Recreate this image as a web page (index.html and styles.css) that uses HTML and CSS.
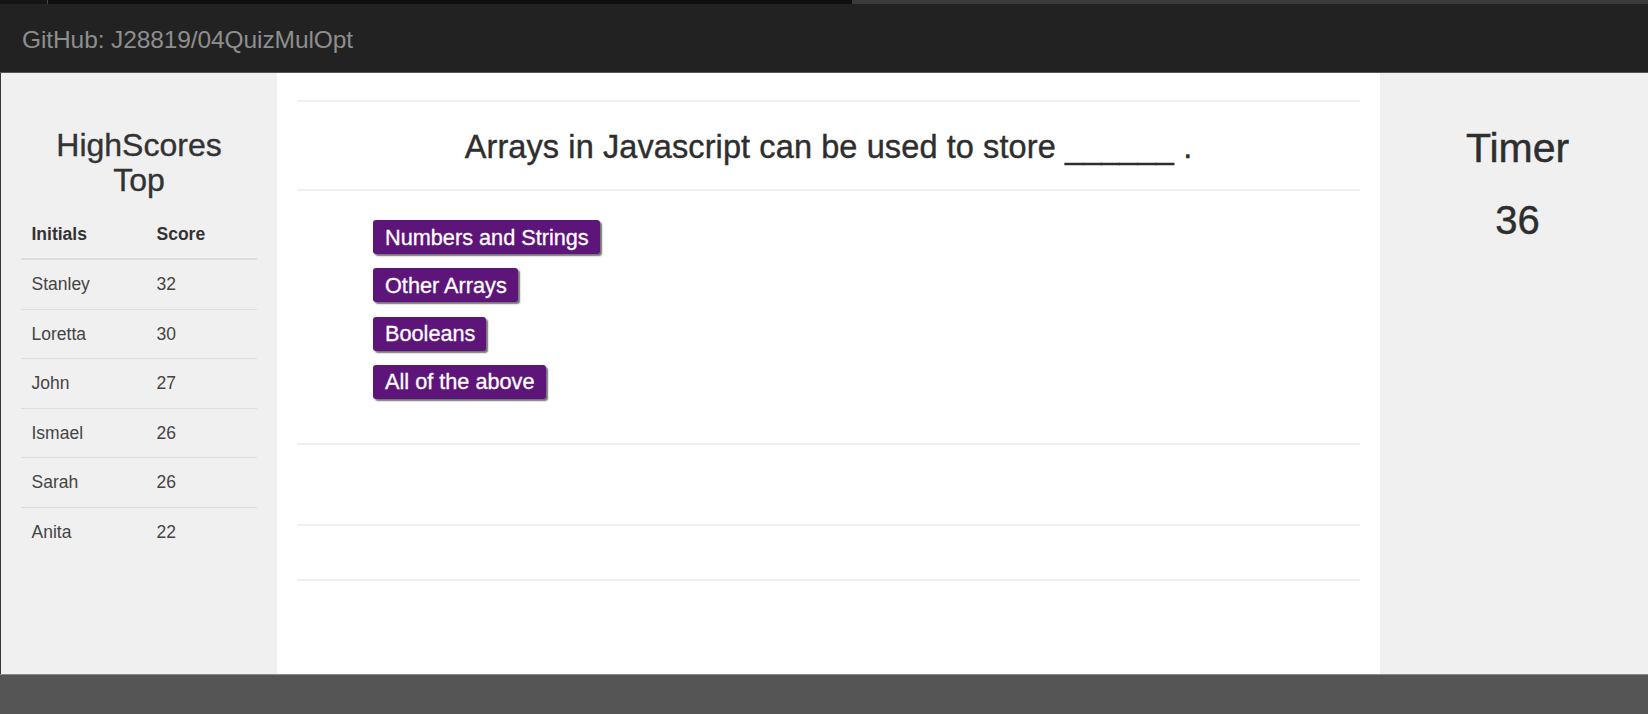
FILE: index.html
```html
<!DOCTYPE html>
<html lang="en">
<head>
<meta charset="utf-8">
<title>04QuizMulOpt</title>
<link rel="stylesheet" href="styles.css">
</head>
<body>
<div class="topstrip">
  <div class="seg seg-a"></div>
  <div class="seg seg-b"></div>
  <div class="seg seg-c"></div>
</div>
<header class="topbar">
  <span class="repo">GitHub: J28819/04QuizMulOpt</span>
</header>
<div class="layout">
  <aside class="scores">
    <h2 class="scores-title">HighScores<br>Top</h2>
    <table class="score-table">
      <thead>
        <tr><th class="col-name">Initials</th><th>Score</th></tr>
      </thead>
      <tbody>
        <tr><td>Stanley</td><td>32</td></tr>
        <tr><td>Loretta</td><td>30</td></tr>
        <tr><td>John</td><td>27</td></tr>
        <tr><td>Ismael</td><td>26</td></tr>
        <tr><td>Sarah</td><td>26</td></tr>
        <tr><td>Anita</td><td>22</td></tr>
      </tbody>
    </table>
  </aside>
  <main class="quiz">
    <div class="rule rule-top"></div>
    <h1 class="question">Arrays in Javascript can be used to store ______ .</h1>
    <div class="rule"></div>
    <div class="answers">
      <button class="answer">Numbers and Strings</button>
      <button class="answer">Other Arrays</button>
      <button class="answer">Booleans</button>
      <button class="answer">All of the above</button>
    </div>
    <div class="rule"></div>
    <div class="spacer-a"></div>
    <div class="rule"></div>
    <div class="spacer-b"></div>
    <div class="rule"></div>
  </main>
  <aside class="timer">
    <h2 class="timer-title">Timer</h2>
    <div class="timer-value">36</div>
  </aside>
</div>
<footer class="footer"></footer>
</body>
</html>
```

FILE: styles.css
```css
* { box-sizing: border-box; }

html, body {
  margin: 0;
  padding: 0;
  height: 714px;
  overflow: hidden;
  font-family: "Liberation Sans", Arial, Helvetica, sans-serif;
  color: #333;
  background: #f0f0f0;
}

.topstrip {
  display: flex;
  height: 4px;
  background: #0e0e0e;
}
.seg { height: 4px; }
.seg-a { width: 48px; border-right: 1px solid #444; background: #151515; }
.seg-b { width: 804px; background: #0e0e0e; }
.seg-c { flex: 1; background: #3b3b3b; }

.topbar {
  height: 69px;
  background: #222;
  border-bottom: 1px solid #555;
  display: flex;
  align-items: center;
  padding: 3px 0 0 22px;
}
.repo {
  color: #8e8e8e;
  font-size: 24.5px;
  letter-spacing: -0.1px;
}

.layout {
  display: grid;
  grid-template-columns: 277px 1fr 268px;
  height: 601px;
}

.scores {
  background: #f0f0f0;
  border-left: 1px solid #3a3a3a;
  padding: 0 20px 0 20px;
}
.scores-title {
  margin: 55px 0 12px;
  text-align: center;
  font-size: 32px;
  line-height: 35px;
  font-weight: normal;
  color: #333;
  -webkit-text-stroke: 0.35px #333;
}
.score-table {
  width: 236px;
  border-collapse: separate;
  border-spacing: 0;
  font-size: 17.5px;
}
.score-table th {
  text-align: left;
  font-weight: bold;
  color: #333;
  line-height: 26px;
  padding: 11px 10.5px;
  border-bottom: 2px solid #ddd;
}
.score-table th.col-name { width: 125px; }
.score-table td {
  color: #444;
  line-height: 26px;
  padding: 11.25px 10.5px;
}
.score-table tbody tr + tr td { border-top: 1px solid #ddd; }

.quiz {
  background: #fff;
  padding: 0 20px;
}
.rule {
  height: 2px;
  background: #f0f0f0;
}
.rule-top { margin-top: 27px; }
.question {
  margin: 0;
  height: 87px;
  padding-top: 4px;
  display: flex;
  align-items: center;
  justify-content: center;
  font-size: 32.5px;
  font-weight: normal;
  color: #2e2e2e;
  letter-spacing: 0.1px;
  -webkit-text-stroke: 0.4px #2e2e2e;
}
.answers {
  display: flex;
  flex-direction: column;
  align-items: flex-start;
  gap: 14.3px;
  padding: 29px 0 44px 76px;
}
.answer {
  font-family: "Liberation Sans", Arial, Helvetica, sans-serif;
  font-size: 21.7px;
  line-height: 25px;
  color: #fff;
  background: #5e157a;
  border: none;
  border-radius: 3px;
  padding: 4.5px 11px 4.5px 12px;
  box-shadow: 2px 2px 1.5px rgba(0, 0, 0, 0.55);
  -webkit-text-stroke: 0.3px #fff;
  cursor: pointer;
}
.spacer-a { height: 79px; }
.spacer-b { height: 53px; }

.timer {
  background: #f0f0f0;
  text-align: center;
  padding-left: 7px;
}
.timer-title {
  margin: 51px 0 0;
  font-size: 41px;
  line-height: 48px;
  font-weight: normal;
  color: #2e2e2e;
  -webkit-text-stroke: 0.45px #2e2e2e;
}
.timer-value {
  margin-top: 24px;
  font-size: 40px;
  line-height: 48px;
  color: #2e2e2e;
  -webkit-text-stroke: 0.45px #2e2e2e;
}

.footer {
  height: 40px;
  background: #555;
  border-top: 1px solid #8a8a8a;
}
```
